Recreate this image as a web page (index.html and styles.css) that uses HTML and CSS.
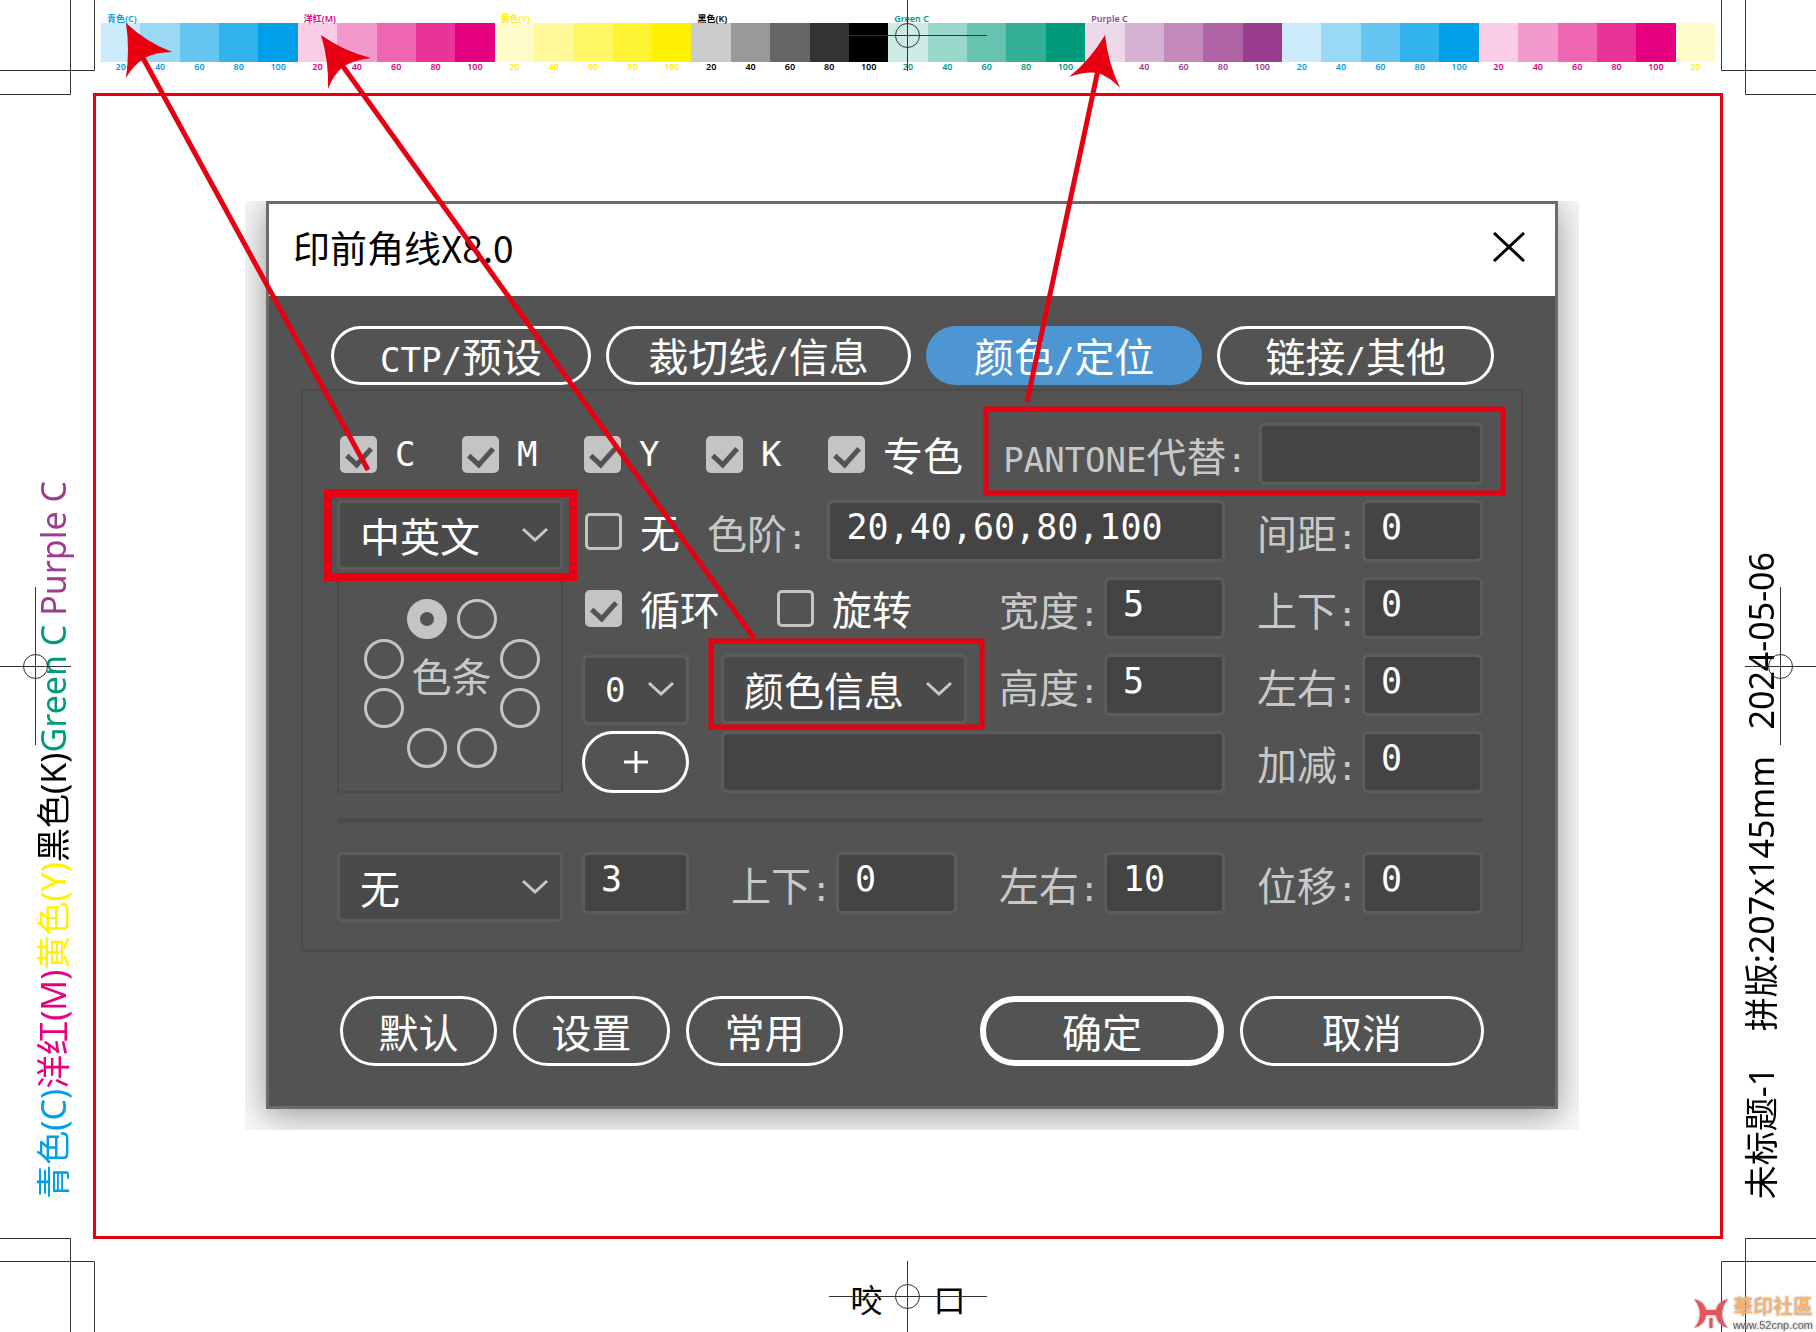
FILE: index.html
```
<!DOCTYPE html>
<html lang="zh-CN">

<head>
    <meta charset="utf-8">
    <title>印前角线X8.0</title>
    <link rel="stylesheet" href="styles.css">
</head>

<body>
    <header class="color-bar">
        <div class="group cyan"><b>青色(C)</b><span class="t20">20</span><span class="t40">40</span><span class="t60">60</span><span class="t80">80</span><span class="t100">100</span></div>
        <div class="group magenta"><b>洋红(M)</b><span class="t20">20</span><span class="t40">40</span><span class="t60">60</span><span class="t80">80</span><span class="t100">100</span></div>
        <div class="group yellow"><b>黄色(Y)</b><span class="t20">20</span><span class="t40">40</span><span class="t60">60</span><span class="t80">80</span><span class="t100">100</span></div>
        <div class="group black"><b>黑色(K)</b><span class="t20">20</span><span class="t40">40</span><span class="t60">60</span><span class="t80">80</span><span class="t100">100</span></div>
        <div class="group green"><b>Green C</b><span class="t20">20</span><span class="t40">40</span><span class="t60">60</span><span class="t80">80</span><span class="t100">100</span></div>
        <div class="group purple"><b>Purple C</b><span class="t20">20</span><span class="t40">40</span><span class="t60">60</span><span class="t80">80</span><span class="t100">100</span></div>
        <div class="group cyan"><span class="t20">20</span><span class="t40">40</span><span class="t60">60</span><span class="t80">80</span><span class="t100">100</span></div>
        <div class="group magenta"><span class="t20">20</span><span class="t40">40</span><span class="t60">60</span><span class="t80">80</span><span class="t100">100</span></div>
        <div class="group single yellow"><span class="t20">20</span></div>
    </header>

    <aside class="side left">
        <p><span class="cyan">青色(C)</span><span class="magenta">洋红(M)</span><span class="yellow">黄色(Y)</span><span class="black">黑色(K)</span><span class="green">Green C</span> <span class="purple">Purple C</span></p>
    </aside>

    <main class="sheet">
        <div class="shot">
            <div class="dialog">
                <div class="titlebar">
                    <h1>印前角线X8.0</h1>
                    <button class="close" aria-label="关闭">
                        <svg width="32" height="30" viewBox="0 0 32 30"><path d="M1 1L31 29M31 1L1 29" stroke="#000" stroke-width="3"/></svg>
                    </button>
                </div>

                <nav class="tabs">
                    <button class="tab short"><span class="latin">CTP/</span>预设</button>
                    <button class="tab long">裁切线<span class="latin">/</span>信息</button>
                    <button class="tab active">颜色<span class="latin">/</span>定位</button>
                    <button class="tab">链接<span class="latin">/</span>其他</button>
                </nav>

                <div class="panel">
                    <div class="row">
                        <label class="check"><input type="checkbox" checked><span class="latin">C</span></label>
                        <label class="check"><input type="checkbox" checked><span class="latin">M</span></label>
                        <label class="check"><input type="checkbox" checked><span class="latin">Y</span></label>
                        <label class="check"><input type="checkbox" checked><span class="latin">K</span></label>
                        <label class="check"><input type="checkbox" checked>专色</label>
                        <div class="field pantone">
                            <label for="pantone"><span class="latin">PANTONE</span>代替<span class="latin">:</span></label>
                            <input type="text" id="pantone">
                        </div>
                    </div>

                    <div class="split">
                        <div class="column">
                            <div class="select">
                                <select aria-label="语言"><option>中英文</option></select>
                                <svg width="28" height="18" viewBox="0 0 28 18"><path d="M2 3L14 14L26 3"/></svg>
                            </div>
                            <fieldset class="positions">
                                <div class="pair">
                                    <input type="radio" name="pos" aria-label="上左" checked>
                                    <input type="radio" name="pos" aria-label="上右">
                                </div>
                                <div class="middle">
                                    <div class="stack">
                                        <input type="radio" name="pos" aria-label="左上">
                                        <input type="radio" name="pos" aria-label="左下">
                                    </div>
                                    <span>色条</span>
                                    <div class="stack">
                                        <input type="radio" name="pos" aria-label="右上">
                                        <input type="radio" name="pos" aria-label="右下">
                                    </div>
                                </div>
                                <div class="pair">
                                    <input type="radio" name="pos" aria-label="下左">
                                    <input type="radio" name="pos" aria-label="下右">
                                </div>
                            </fieldset>
                        </div>

                        <div class="rows">
                            <div class="row">
                                <label class="check"><input type="checkbox">无</label>
                                <div class="field wide">
                                    <label for="steps">色阶<span class="latin">:</span></label>
                                    <input type="text" id="steps" value="20,40,60,80,100">
                                </div>
                                <div class="field">
                                    <label for="gap">间距<span class="latin">:</span></label>
                                    <input type="text" id="gap" value="0">
                                </div>
                            </div>
                            <div class="row">
                                <label class="check loop"><input type="checkbox" checked>循环</label>
                                <label class="check turn"><input type="checkbox">旋转</label>
                                <div class="field">
                                    <label for="width">宽度<span class="latin">:</span></label>
                                    <input type="text" id="width" value="5">
                                </div>
                                <div class="field">
                                    <label for="offsetY">上下<span class="latin">:</span></label>
                                    <input type="text" id="offsetY" value="0">
                                </div>
                            </div>
                            <div class="row">
                                <div class="select small">
                                    <select class="latin" aria-label="数量"><option>0</option></select>
                                    <svg width="28" height="18" viewBox="0 0 28 18"><path d="M2 3L14 14L26 3"/></svg>
                                </div>
                                <div class="select info">
                                    <select aria-label="信息"><option>颜色信息</option></select>
                                    <svg width="28" height="18" viewBox="0 0 28 18"><path d="M2 3L14 14L26 3"/></svg>
                                </div>
                                <div class="field">
                                    <label for="height">高度<span class="latin">:</span></label>
                                    <input type="text" id="height" value="5">
                                </div>
                                <div class="field">
                                    <label for="offsetX">左右<span class="latin">:</span></label>
                                    <input type="text" id="offsetX" value="0">
                                </div>
                            </div>
                            <div class="row">
                                <button class="add" aria-label="添加">
                                    <svg width="24" height="22" viewBox="0 0 24 22"><path d="M12 0V22M0 11H24" stroke="#fff" stroke-width="3"/></svg>
                                </button>
                                <input type="text" class="grow" aria-label="自定义">
                                <div class="field">
                                    <label for="adjust">加减<span class="latin">:</span></label>
                                    <input type="text" id="adjust" value="0">
                                </div>
                            </div>
                        </div>
                    </div>

                    <hr>

                    <div class="split">
                        <div class="select">
                            <select aria-label="定位"><option>无</option></select>
                            <svg width="28" height="18" viewBox="0 0 28 18"><path d="M2 3L14 14L26 3"/></svg>
                        </div>
                        <div class="row">
                            <input type="text" class="small" aria-label="大小" value="3">
                            <div class="field center">
                                <label for="posY">上下<span class="latin">:</span></label>
                                <input type="text" id="posY" value="0">
                            </div>
                            <div class="field">
                                <label for="posX">左右<span class="latin">:</span></label>
                                <input type="text" id="posX" value="10">
                            </div>
                            <div class="field">
                                <label for="shift">位移<span class="latin">:</span></label>
                                <input type="text" id="shift" value="0">
                            </div>
                        </div>
                    </div>
                </div>

                <div class="actions">
                    <button>默认</button>
                    <button>设置</button>
                    <button>常用</button>
                    <button class="large ok">确定</button>
                    <button class="large">取消</button>
                </div>
            </div>
        </div>
    </main>

    <aside class="side right">
        <p>未标题-1    拼版:207x145mm   2024-05-06</p>
    </aside>

    <footer class="gripper"><span>咬</span><span>口</span></footer>

    <!-- crop marks, registration marks and red call-outs -->
    <svg class="marks" viewBox="0 0 1816 1332" preserveAspectRatio="none">
        <g fill="none" stroke="#333" stroke-width="1">
            <path d="M0 70.5H94.5V0M70.5 0V94.5H0"/>
            <path d="M1816 70.5H1721.5V0M1745.5 0V94.5H1816"/>
            <path d="M0 1261.5H94.5V1332M70.5 1332V1238.5H0"/>
            <path d="M1816 1261.5H1721.5V1332M1745.5 1332V1238.5H1816"/>
            <path d="M829 35.5H987M907.5 0V71"/>
            <circle cx="907.5" cy="35.5" r="12"/>
            <path d="M829 1296.5H987M907.5 1261V1332"/>
            <circle cx="907.5" cy="1296.5" r="12"/>
            <path d="M0 666.5H71M35.5 587V745"/>
            <circle cx="35.5" cy="666.5" r="12"/>
            <path d="M1745 666.5H1816M1780.5 587V745"/>
            <circle cx="1780.5" cy="666.5" r="12"/>
        </g>
        <g fill="none" stroke="#e60012" stroke-width="5">
            <path d="M143 58L368 470"/>
            <path d="M342 65L754 638"/>
            <path d="M1098 70L1027 402"/>
            <rect x="328" y="493" width="245" height="84" stroke-width="8"/>
            <rect x="711" y="641" width="271" height="86"/>
            <rect x="986" y="409" width="517" height="84"/>
        </g>
        <g fill="#e60012">
            <path d="M126 23Q146 42 172 52Q156 52 144 58Q132 67 126 78Q130 50 126 23Z"/>
            <path d="M321 35Q343 51 371 58Q355 60 344 66Q333 75 328 89Q329 61 321 35Z"/>
            <path d="M1105 35Q1108 63 1120 88Q1110 77 1098 73Q1085 71 1069 77Q1091 59 1105 35Z"/>
        </g>
    </svg>

    <div class="watermark">
        <svg width="36" height="32" viewBox="0 0 36 32">
            <path fill="#e2565c" d="M1 1Q12 4 13 12H23Q24 4 35 1Q29 8 29 16Q29 24 35 30Q24 27 23 17H13Q12 27 1 30Q7 24 7 16Q7 8 1 1Z"/>
            <path fill="none" stroke="#e2565c" stroke-width="3" d="M18 20V30"/>
        </svg>
        <div>
            <strong>華印社區</strong>
            <small>www.52cnp.com</small>
        </div>
    </div>
</body>

</html>
```

FILE: styles.css
```
* {
    box-sizing: border-box;
}

body {
    position: relative;
    margin: 0;
    min-height: 100vh;
    display: grid;
    grid-template-columns: 93px 1fr 93px;
    grid-template-rows: 93px 1fr 93px;
    background: #fff;
    font-family: "Noto Sans", "Noto Sans CJK SC", sans-serif;
    color: #000;
}

button,
input,
select {
    font: inherit;
    color: inherit;
    margin: 0;
}

.cyan { color: #00a0e9; }
.magenta { color: #e4007f; }
.yellow { color: #fff100; }
.black { color: #000; }
.green { color: #009b7c; }
.purple { color: #9c3c8f; }

/* colour bar */
.color-bar {
    grid-column: 2;
    display: flex;
    padding: 23px 8px 0;
    font-size: 9px;
    line-height: 9px;
}

.group {
    position: relative;
    flex: 5;
    display: flex;
}

.group.single {
    flex: 1;
}

.group b {
    position: absolute;
    top: -9px;
    left: 6px;
    font-weight: 600;
}

.group span {
    flex: 1;
    text-align: center;
    font-weight: 600;
}

.group span::before {
    content: "";
    display: block;
    height: 39px;
    background: currentColor;
}

.t20::before { opacity: 0.2; }
.t40::before { opacity: 0.4; }
.t60::before { opacity: 0.6; }
.t80::before { opacity: 0.8; }

/* side texts */
.side {
    grid-row: 2;
    display: flex;
    align-items: flex-end;
    padding-bottom: 40px;
    font-size: 34px;
    line-height: 40px;
}

.side p {
    margin: 0;
    white-space: pre;
    writing-mode: vertical-rl;
    text-orientation: sideways;
    transform: rotate(180deg);
}

.left {
    grid-column: 1;
    padding-left: 33px;
}

.right {
    grid-column: 3;
    padding-left: 18px;
}

/* sheet */
.sheet {
    grid-column: 2;
    grid-row: 2;
    border: 3px solid #e60012;
    padding: 105px 141px 0 149px;
}

.shot {
    overflow: hidden;
    padding: 0 21px 21px;
    background: #f8f8f8;
}

.dialog {
    border: 3px solid #6b6b6b;
    background: #535353;
    box-shadow: 0 6px 32px rgba(0, 0, 0, 0.4);
    color: #fff;
    font-family: "Noto Sans CJK SC", sans-serif;
    font-size: 40px;
    line-height: 62px;
    padding-bottom: 40px;
}

.latin {
    font-family: "DejaVu Sans Mono", monospace;
    font-size: 34px;
}

.titlebar {
    display: flex;
    justify-content: space-between;
    align-items: center;
    height: 92px;
    padding: 0 30px 6px 24px;
    background: #fff;
    color: #000;
}

.titlebar h1 {
    margin: 0;
    font-size: 37px;
    font-weight: 400;
}

.close {
    display: flex;
    padding: 0;
    border: none;
    background: none;
}

.tabs {
    display: flex;
    gap: 15px;
    margin: 30px 61px 4px 62px;
}

.tab {
    flex: 277;
    height: 59px;
    padding: 0;
    line-height: 53px;
    white-space: nowrap;
    border: 3px solid #fff;
    border-radius: 30px;
    background: none;
}

.tab.short { flex: 260; }
.tab.long { flex: 306; }

.tab.active {
    background: #4d96d2;
    border-color: #4d96d2;
}

.panel {
    margin: 0 32px;
    padding: 32px 38px 28px 34px;
    border: 2px solid #4a4a4a;
    border-radius: 4px;
}

.row {
    display: flex;
    height: 62px;
    gap: 32px;
}

.split {
    display: grid;
    grid-template-columns: 226px 1fr;
    gap: 19px;
}

.panel > .row {
    gap: 0;
    margin-bottom: 15px;
}

.rows,
.column {
    display: flex;
    flex-direction: column;
    gap: 15px;
}

.column {
    gap: 7px;
}

.check {
    display: flex;
    align-items: center;
    gap: 18px;
    width: 122px;
    padding-left: 3px;
    line-height: 60px;
    white-space: nowrap;
}

.rows .check { margin-right: -29px; }
.rows .check.loop { width: 192px; margin-right: -32px; }
.rows .check.turn { margin-right: auto; }

.check input {
    appearance: none;
    flex: none;
    display: flex;
    justify-content: center;
    width: 37px;
    height: 37px;
    border: 3px solid #c4c4c4;
    border-radius: 5px;
}

.check input:checked {
    background: #c4c4c4;
}

.check input:checked::before {
    content: "";
    width: 11px;
    height: 19px;
    margin-top: 3px;
    border: solid #535353;
    border-width: 0 5px 5px 0;
    transform: rotate(42deg);
}

input[type="text"] {
    width: 121px;
    height: 62px;
    padding: 0 0 9px 16px;
    border: 3px solid #5c5c5c;
    border-radius: 6px;
    background: #444;
    font-family: "DejaVu Sans Mono", monospace;
    font-size: 35px;
}

input[type="text"].small {
    width: 107px;
}

input[type="text"].grow {
    flex: 1;
    min-width: 0;
}

.field {
    display: flex;
    justify-content: space-between;
    width: 226px;
    white-space: nowrap;
    color: #c8c8c8;
}

.field label {
    line-height: 64px;
}

.field input {
    color: #fff;
}

.field.wide {
    flex: 1;
}

.field.wide input {
    flex: 1;
    min-width: 0;
    margin-left: 20px;
}

.field.pantone {
    width: auto;
    gap: 12px;
    margin-left: auto;
}

.field.pantone input {
    width: 224px;
}

.field.center {
    margin: 0 auto;
}

.select {
    position: relative;
    height: 70px;
}

.select.small {
    width: 107px;
}

.select.info {
    flex: 1;
}

.select select {
    appearance: none;
    width: 100%;
    height: 100%;
    padding: 0 0 0 20px;
    border: 3px solid #5c5c5c;
    border-radius: 6px;
    background: #4a4a4a;
}

.select svg {
    position: absolute;
    right: 14px;
    top: 26px;
    fill: none;
    stroke: #c8c8c8;
    stroke-width: 3;
}

.positions {
    flex: 1;
    display: flex;
    flex-direction: column;
    align-items: center;
    margin: 0;
    padding: 20px 0 0 3px;
    border: 2px solid #4a4a4a;
    border-radius: 4px;
    line-height: 72px;
    color: #c8c8c8;
}

.pair {
    display: flex;
    gap: 10px;
}

.middle {
    display: flex;
    gap: 8px;
}

.stack {
    display: flex;
    flex-direction: column;
    gap: 9px;
}

.positions input {
    appearance: none;
    display: block;
    width: 40px;
    height: 40px;
    border: 3px solid #c4c4c4;
    border-radius: 50%;
}

.positions input:checked {
    border-width: 13px;
    background: #535353;
}

.add,
.actions button {
    height: 70px;
    padding: 0;
    border: 3px solid #fff;
    border-radius: 35px;
    line-height: 60px;
    background: none;
}

.add {
    display: flex;
    justify-content: center;
    align-items: center;
    width: 107px;
    height: 62px;
}

hr {
    height: 5px;
    margin: 25px 0 29px;
    border: none;
    background: #4a4a4a;
}

.actions {
    display: flex;
    gap: 16px;
    margin: 44px 71px 0;
}

.actions button {
    width: 157px;
}

.actions .large {
    width: 244px;
}

.actions .ok {
    margin-left: auto;
    border-width: 6px;
    line-height: 54px;
}

.gripper {
    grid-column: 2;
    grid-row: 3;
    display: flex;
    justify-content: center;
    gap: 51px;
    padding-top: 38px;
    font-size: 32px;
    line-height: 46px;
}

.marks {
    position: absolute;
    top: 0;
    left: 0;
    width: 100%;
    height: 100%;
    pointer-events: none;
}

.watermark {
    position: absolute;
    right: 3px;
    bottom: 0;
    display: flex;
    align-items: center;
    gap: 4px;
    filter: drop-shadow(0 0 1px #999);
}

.watermark strong,
.watermark small {
    display: block;
}

.watermark strong {
    font-family: "Liberation Sans", "Noto Sans CJK TC", sans-serif;
    font-size: 20px;
    line-height: 24px;
    font-weight: 500;
    color: #ffb066;
}

.watermark small {
    font-family: "Liberation Sans", sans-serif;
    font-size: 11px;
    line-height: 13px;
    color: #666;
}
```
